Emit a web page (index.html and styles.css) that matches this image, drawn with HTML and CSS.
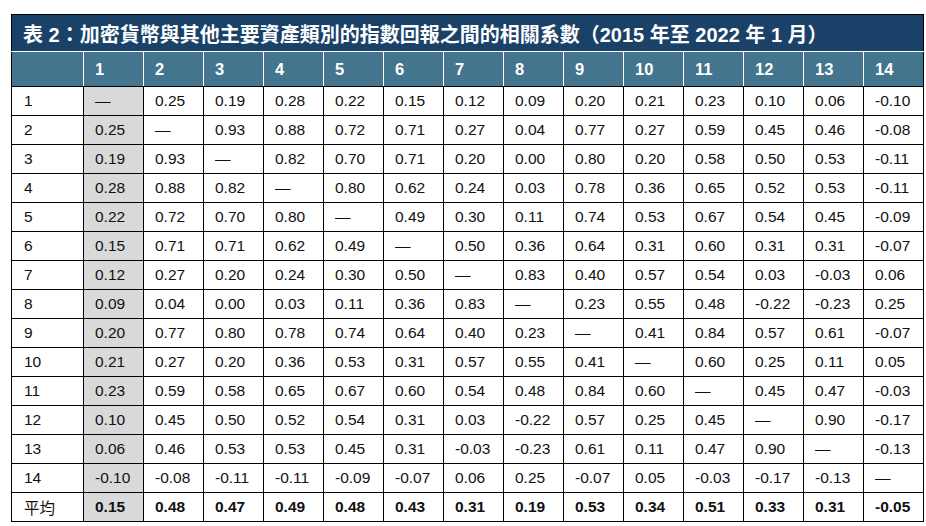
FILE: index.html
```html
<!DOCTYPE html>
<html lang="zh-Hant">
<head>
<meta charset="utf-8">
<title>相關系數</title>
<link rel="stylesheet" href="styles.css">
</head>
<body>
<div class="page">
<table class="tbl">
<colgroup>
<col class="c-first">
<col class="c"><col class="c"><col class="c"><col class="c"><col class="c"><col class="c"><col class="c">
<col class="c"><col class="c"><col class="c"><col class="c"><col class="c"><col class="c"><col class="c">
</colgroup>
<thead>
<tr class="title-row"><th colspan="15">表 2：加密貨幣與其他主要資產類別的指數回報之間的相關系數（2015 年至 2022 年 1 月）</th></tr>
<tr class="head-row">
<th></th><th>1</th><th>2</th><th>3</th><th>4</th><th>5</th><th>6</th><th>7</th><th>8</th><th>9</th><th>10</th><th>11</th><th>12</th><th>13</th><th>14</th>
</tr>
</thead>
<tbody>
<tr><td>1</td><td class="g">—</td><td>0.25</td><td>0.19</td><td>0.28</td><td>0.22</td><td>0.15</td><td>0.12</td><td>0.09</td><td>0.20</td><td>0.21</td><td>0.23</td><td>0.10</td><td>0.06</td><td>-0.10</td></tr>
<tr><td>2</td><td class="g">0.25</td><td>—</td><td>0.93</td><td>0.88</td><td>0.72</td><td>0.71</td><td>0.27</td><td>0.04</td><td>0.77</td><td>0.27</td><td>0.59</td><td>0.45</td><td>0.46</td><td>-0.08</td></tr>
<tr><td>3</td><td class="g">0.19</td><td>0.93</td><td>—</td><td>0.82</td><td>0.70</td><td>0.71</td><td>0.20</td><td>0.00</td><td>0.80</td><td>0.20</td><td>0.58</td><td>0.50</td><td>0.53</td><td>-0.11</td></tr>
<tr><td>4</td><td class="g">0.28</td><td>0.88</td><td>0.82</td><td>—</td><td>0.80</td><td>0.62</td><td>0.24</td><td>0.03</td><td>0.78</td><td>0.36</td><td>0.65</td><td>0.52</td><td>0.53</td><td>-0.11</td></tr>
<tr><td>5</td><td class="g">0.22</td><td>0.72</td><td>0.70</td><td>0.80</td><td>—</td><td>0.49</td><td>0.30</td><td>0.11</td><td>0.74</td><td>0.53</td><td>0.67</td><td>0.54</td><td>0.45</td><td>-0.09</td></tr>
<tr><td>6</td><td class="g">0.15</td><td>0.71</td><td>0.71</td><td>0.62</td><td>0.49</td><td>—</td><td>0.50</td><td>0.36</td><td>0.64</td><td>0.31</td><td>0.60</td><td>0.31</td><td>0.31</td><td>-0.07</td></tr>
<tr><td>7</td><td class="g">0.12</td><td>0.27</td><td>0.20</td><td>0.24</td><td>0.30</td><td>0.50</td><td>—</td><td>0.83</td><td>0.40</td><td>0.57</td><td>0.54</td><td>0.03</td><td>-0.03</td><td>0.06</td></tr>
<tr><td>8</td><td class="g">0.09</td><td>0.04</td><td>0.00</td><td>0.03</td><td>0.11</td><td>0.36</td><td>0.83</td><td>—</td><td>0.23</td><td>0.55</td><td>0.48</td><td>-0.22</td><td>-0.23</td><td>0.25</td></tr>
<tr><td>9</td><td class="g">0.20</td><td>0.77</td><td>0.80</td><td>0.78</td><td>0.74</td><td>0.64</td><td>0.40</td><td>0.23</td><td>—</td><td>0.41</td><td>0.84</td><td>0.57</td><td>0.61</td><td>-0.07</td></tr>
<tr><td>10</td><td class="g">0.21</td><td>0.27</td><td>0.20</td><td>0.36</td><td>0.53</td><td>0.31</td><td>0.57</td><td>0.55</td><td>0.41</td><td>—</td><td>0.60</td><td>0.25</td><td>0.11</td><td>0.05</td></tr>
<tr><td>11</td><td class="g">0.23</td><td>0.59</td><td>0.58</td><td>0.65</td><td>0.67</td><td>0.60</td><td>0.54</td><td>0.48</td><td>0.84</td><td>0.60</td><td>—</td><td>0.45</td><td>0.47</td><td>-0.03</td></tr>
<tr><td>12</td><td class="g">0.10</td><td>0.45</td><td>0.50</td><td>0.52</td><td>0.54</td><td>0.31</td><td>0.03</td><td>-0.22</td><td>0.57</td><td>0.25</td><td>0.45</td><td>—</td><td>0.90</td><td>-0.17</td></tr>
<tr><td>13</td><td class="g">0.06</td><td>0.46</td><td>0.53</td><td>0.53</td><td>0.45</td><td>0.31</td><td>-0.03</td><td>-0.23</td><td>0.61</td><td>0.11</td><td>0.47</td><td>0.90</td><td>—</td><td>-0.13</td></tr>
<tr><td>14</td><td class="g">-0.10</td><td>-0.08</td><td>-0.11</td><td>-0.11</td><td>-0.09</td><td>-0.07</td><td>0.06</td><td>0.25</td><td>-0.07</td><td>0.05</td><td>-0.03</td><td>-0.17</td><td>-0.13</td><td>—</td></tr>
<tr class="avg"><td class="lbl">平均</td><td class="g">0.15</td><td>0.48</td><td>0.47</td><td>0.49</td><td>0.48</td><td>0.43</td><td>0.31</td><td>0.19</td><td>0.53</td><td>0.34</td><td>0.51</td><td>0.33</td><td>0.31</td><td>-0.05</td></tr>
</tbody>
</table>
</div>
</body>
</html>
```

FILE: styles.css
```css
html, body {
  margin: 0;
  padding: 0;
  background: #ffffff;
}

.page {
  padding: 14px 0 0 11px;
  font-family: "Liberation Sans", "Noto Sans CJK TC", Arial, sans-serif;
  color: #111;
}

.tbl {
  border-collapse: collapse;
  table-layout: fixed;
  width: 912px;
  border: 1px solid #000;
}

.c-first { width: 72px; }
.c { width: 60px; }

.title-row th {
  height: 36px;
  padding: 0 0 0 11px;
  background: #1a4168;
  color: #fff;
  font-size: 20px;
  font-weight: bold;
  text-align: left;
  white-space: nowrap;
  border: 1px solid #000;
  border-bottom: 1px solid #fff;
}

.head-row th {
  height: 34px;
  padding: 0 0 0 11px;
  background: #44758e;
  color: #fff;
  font-size: 16.5px;
  font-weight: bold;
  text-align: left;
  border-left: 1px solid #fff;
  border-right: 1px solid #fff;
  border-bottom: 1px solid #000;
}

.head-row th:first-child { border-left: 1px solid #000; }
.head-row th:last-child { border-right: 1px solid #000; }

tbody td {
  height: 28px;
  padding: 0 0 0 11px;
  border: 1px solid #000;
  font-size: 15.5px;
  text-align: left;
  white-space: nowrap;
}

tbody td:first-child { padding-left: 12px; }

td.g { background: #d9d9d9; }

.avg td { font-weight: bold; }
.avg td.lbl { font-weight: normal; }
```
